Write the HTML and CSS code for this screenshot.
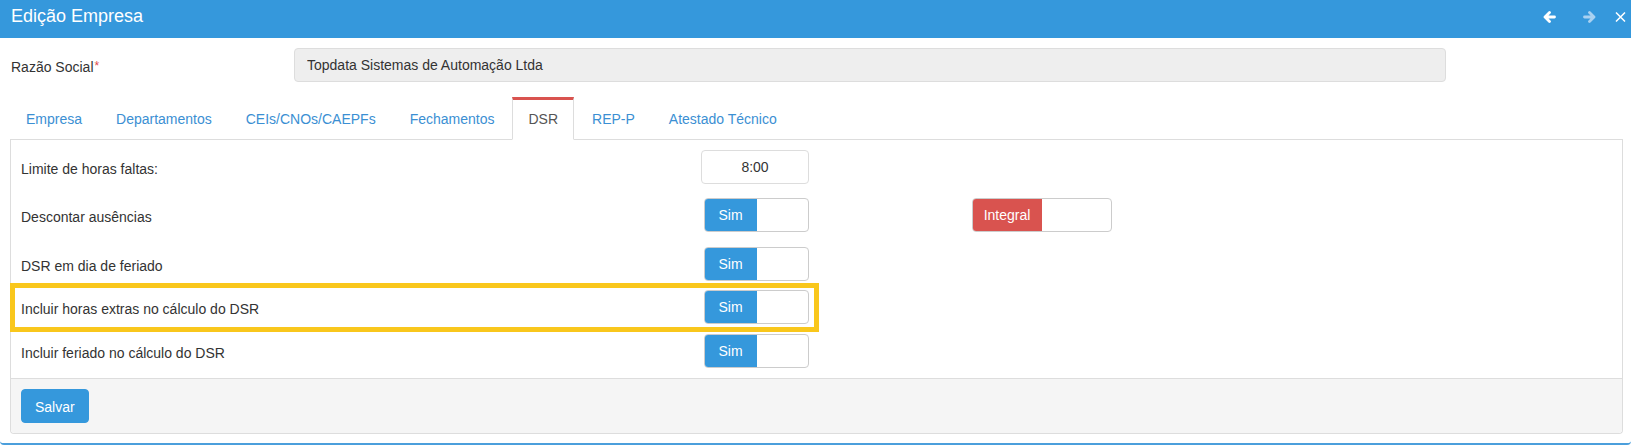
FILE: index.html
```html
<!DOCTYPE html>
<html lang="pt-BR">
<head>
  <meta charset="UTF-8" />
  <meta name="viewport" content="width=device-width, initial-scale=1.0"/>
  <title>Edição Empresa</title>
  <link rel="stylesheet" href="styles.css">
</head>
<body>

<div class="window">
  <div class="window-header">
    <span class="window-title">Edição Empresa</span>
    <div class="window-tools">
      <!-- anterior / próximo / fechar -->
      <svg class="tool tool-prev" width="13" height="12" viewBox="0 0 13 12">
        <path d="M6.5 1.5 L2 6 L6.5 10.5 M2.5 6 H11.5" fill="none" stroke="#fff" stroke-width="2.8" stroke-linecap="round" stroke-linejoin="round"/>
      </svg>
      <svg class="tool tool-next" width="13" height="12" viewBox="0 0 13 12">
        <path d="M6.5 1.5 L11 6 L6.5 10.5 M10.5 6 H1.5" fill="none" stroke="#a9d1f1" stroke-width="2.8" stroke-linecap="round" stroke-linejoin="round"/>
      </svg>
      <svg class="tool tool-close" width="11" height="10" viewBox="0 0 11 10">
        <path d="M1 0.5 L10 9.5 M10 0.5 L1 9.5" fill="none" stroke="#fff" stroke-width="1.5"/>
      </svg>
    </div>
  </div>

  <div class="field-main">
    <label class="main-label">Razão Social<span class="req">*</span></label>
    <input class="main-input" type="text" value="Topdata Sistemas de Automação Ltda" readonly />
  </div>

  <ul class="tabs">
    <li><a>Empresa</a></li>
    <li><a>Departamentos</a></li>
    <li><a>CEIs/CNOs/CAEPFs</a></li>
    <li><a>Fechamentos</a></li>
    <li class="active"><a>DSR</a></li>
    <li><a>REP-P</a></li>
    <li><a>Atestado Técnico</a></li>
  </ul>

  <div class="panel">
    <div class="panel-body">
      <div class="row row-1">
        <span class="row-label">Limite de horas faltas:</span>
        <input class="hours" type="text" value="8:00" />
      </div>

      <div class="row row-2">
        <span class="row-label">Descontar ausências</span>
        <div class="switch"><span class="switch-on">Sim</span></div>
        <div class="switch switch-wide"><span class="switch-on danger">Integral</span></div>
      </div>

      <div class="row row-3">
        <span class="row-label">DSR em dia de feriado</span>
        <div class="switch"><span class="switch-on">Sim</span></div>
      </div>

      <div class="row highlight">
        <span class="row-label">Incluir horas extras no cálculo do DSR</span>
        <div class="switch"><span class="switch-on">Sim</span></div>
      </div>

      <div class="row row-5">
        <span class="row-label">Incluir feriado no cálculo do DSR</span>
        <div class="switch"><span class="switch-on">Sim</span></div>
      </div>
    </div>

    <div class="panel-footer">
      <button type="button" class="btn">Salvar</button>
    </div>
  </div>
</div>

</body>
</html>
```

FILE: styles.css
```css
body {
  margin: 0;
  font-family: "Liberation Sans", Arial, sans-serif;
  font-size: 14px;
  color: #333;
  background: #fff;
}

.window {
  height: 445px;
  box-sizing: border-box;
  border-bottom: 2px solid #4b9fdc;
  border-bottom-left-radius: 4px;
  border-bottom-right-radius: 4px;
}

.window-header {
  height: 38px;
  background: #3598dc;
  color: #fff;
  display: flex;
  justify-content: space-between;
  padding: 0 5px 0 11px;
}

.window-title {
  font-size: 18px;
  line-height: 32px;
}

.window-tools {
  display: flex;
  align-items: center;
  padding-bottom: 4px;
}

.tool { display: block; }
.tool-next { margin-left: 27px; }
.tool-close { margin-left: 19px; }

/* Razão Social */
.field-main {
  display: flex;
  align-items: center;
  margin-top: 10px;
  padding-left: 11px;
}

.main-label {
  width: 283px;
  padding-top: 3px;
}

.req {
  color: #e04b4b;
  font-size: 12px;
  margin-left: 1px;
  vertical-align: 2px;
}

.main-input {
  width: 1152px;
  height: 34px;
  box-sizing: border-box;
  padding: 6px 12px;
  border: 1px solid #ddd;
  border-radius: 4px;
  background: #eee;
  color: #333;
  font-family: inherit;
  font-size: 14px;
}

/* tabs */
.tabs {
  list-style: none;
  display: flex;
  margin: 15px 8px 0 10px;
  padding: 0;
  border-bottom: 1px solid #ddd;
}

.tabs li {
  margin-right: 2px;
  margin-bottom: -1px;
}

.tabs a {
  display: block;
  padding: 11px 15px 10px;
  line-height: 20px;
  border: 1px solid transparent;
  color: #3b8fd3;
  cursor: pointer;
}

.tabs .active a {
  border-color: #ddd;
  border-top: 3px solid #d9534f;
  border-bottom-color: transparent;
  padding-top: 9px;
  background: #fff;
  color: #555;
}

/* painel */
.panel {
  margin: 0 8px 0 10px;
  border: 1px solid #ddd;
  border-top: 0;
  border-radius: 0 0 4px 4px;
}

.panel-body {
  padding-top: 10px;
}

.row {
  display: flex;
  align-items: center;
  height: 34px;
  padding-left: 10px;
}

.row-label {
  width: 680px;
  flex-shrink: 0;
  padding-top: 3px;
}

.row-1 { margin-bottom: 14px; }
.row-2 { margin-bottom: 15px; }
.row-3 { margin-bottom: 2px; }
.row-5 { margin-bottom: 10px; }

.highlight {
  height: 49px;
  width: 809px;
  box-sizing: border-box;
  margin: 0 0 2px -1px;
  padding: 0 0 1px 6px;
  border: 5px solid #f9c71c;
}

.hours {
  width: 108px;
  height: 34px;
  box-sizing: border-box;
  border: 1px solid #ddd;
  border-radius: 4px;
  text-align: center;
  font-family: inherit;
  font-size: 14px;
  color: #333;
}

.switch {
  display: flex;
  width: 105px;
  height: 34px;
  box-sizing: border-box;
  margin-left: 3px;
  border: 1px solid #ccc;
  border-radius: 4px;
  overflow: hidden;
  background: #fff;
}

.switch-on {
  width: 53px;
  margin: -1px 0 -1px -1px;
  display: flex;
  align-items: center;
  justify-content: center;
  background: #3598dc;
  color: #fff;
}

.switch-wide {
  width: 140px;
  margin-left: 163px;
}

.switch-on.danger {
  width: 70px;
  background: #d9534f;
}

.panel-footer {
  padding: 10px;
  background: #f5f5f5;
  border-top: 1px solid #ddd;
  border-radius: 0 0 4px 4px;
}

.btn {
  height: 34px;
  padding: 7px 13px 5px;
  border: 1px solid #3598dc;
  border-radius: 4px;
  background: #3598dc;
  color: #fff;
  font-family: inherit;
  font-size: 14px;
  cursor: pointer;
}
```
